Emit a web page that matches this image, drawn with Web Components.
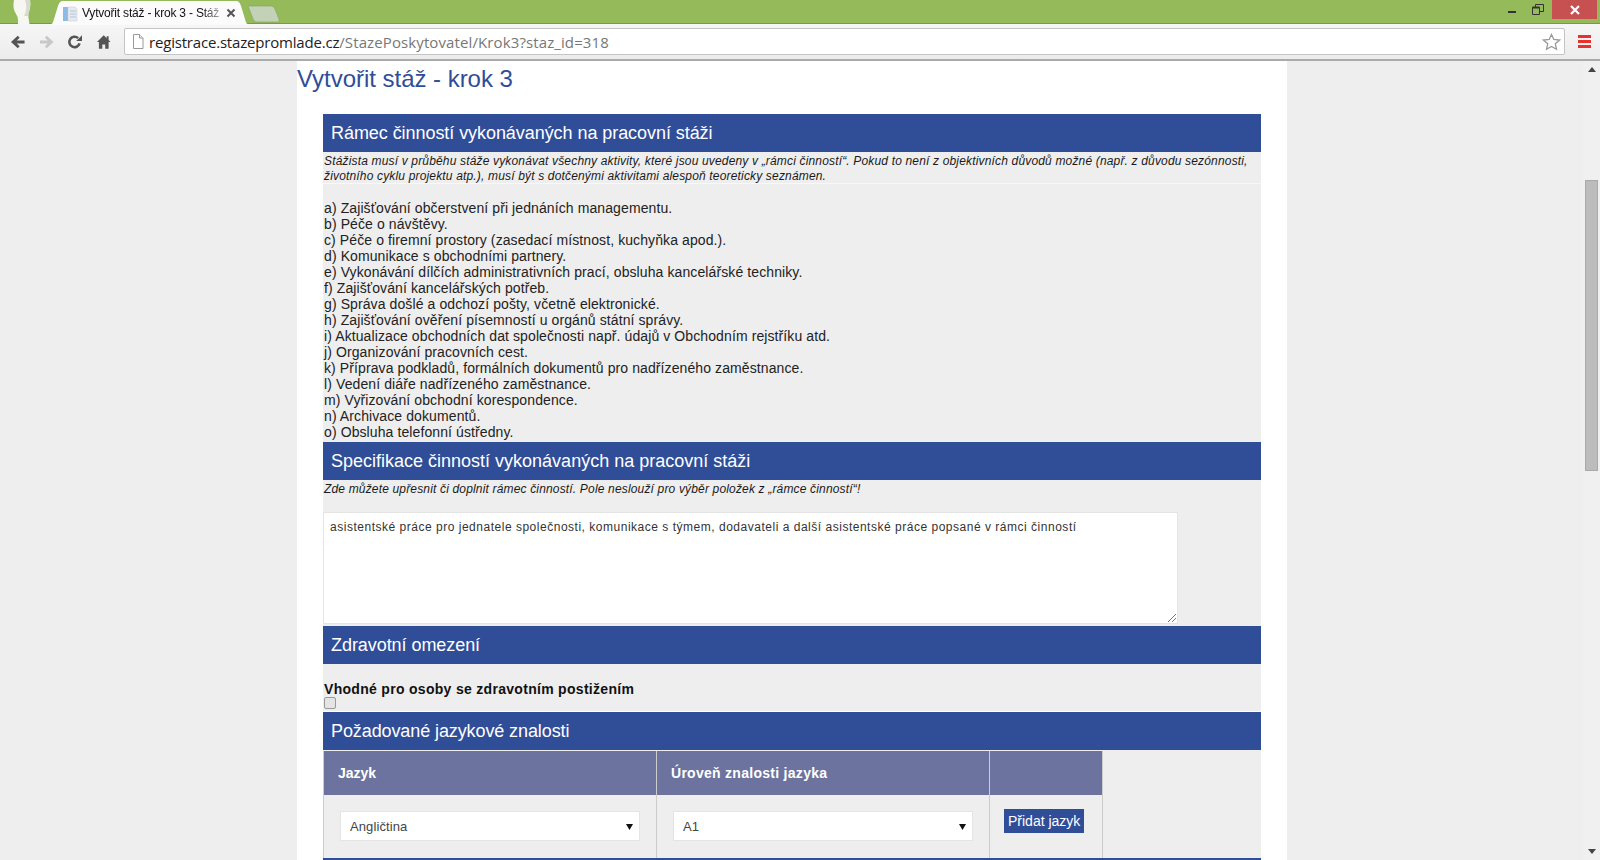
<!DOCTYPE html>
<html lang="cs"><head><meta charset="utf-8"><title>Vytvořit stáž - krok 3</title>
<style>
html,body{margin:0;height:860px;overflow:hidden;font-family:"Liberation Sans",Arial,sans-serif;background:#eee}
body{display:flex;flex-direction:column}
</style></head><body>
<browser-chrome></browser-chrome>
<page-view>
  <h-title>Vytvořit stáž - krok 3</h-title>
  <form-panel>
    <sec-head>Rámec činností vykonávaných na pracovní stáži</sec-head>
    <sec-note bordered>Stážista musí v průběhu stáže vykonávat všechny aktivity, které jsou uvedeny v „rámci činností“. Pokud to není z objektivních důvodů možné (např. z důvodu sezónnosti, životního cyklu projektu atp.), musí být s dotčenými aktivitami alespoň teoreticky seznámen.</sec-note>
    <activity-list>
      <div>a) Zajišťování občerstvení při jednáních managementu.</div>
      <div>b) Péče o návštěvy.</div>
      <div>c) Péče o firemní prostory (zasedací místnost, kuchyňka apod.).</div>
      <div>d) Komunikace s obchodními partnery.</div>
      <div>e) Vykonávání dílčích administrativních prací, obsluha kancelářské techniky.</div>
      <div>f) Zajišťování kancelářských potřeb.</div>
      <div>g) Správa došlé a odchozí pošty, včetně elektronické.</div>
      <div>h) Zajišťování ověření písemností u orgánů státní správy.</div>
      <div>i) Aktualizace obchodních dat společnosti např. údajů v Obchodním rejstříku atd.</div>
      <div>j) Organizování pracovních cest.</div>
      <div>k) Příprava podkladů, formálních dokumentů pro nadřízeného zaměstnance.</div>
      <div>l) Vedení diáře nadřízeného zaměstnance.</div>
      <div>m) Vyřizování obchodní korespondence.</div>
      <div>n) Archivace dokumentů.</div>
      <div>o) Obsluha telefonní ústředny.</div>
    </activity-list>
    <sec-head style="letter-spacing:0">Specifikace činností vykonávaných na pracovní stáži</sec-head>
    <sec-note>Zde můžete upřesnit či doplnit rámec činností. Pole neslouží pro výběr položek z „rámce činností“!</sec-note>
    <spec-area>asistentské práce pro jednatele společnosti, komunikace s týmem, dodavateli a další asistentské práce popsané v rámci činností</spec-area>
    <sec-head>Zdravotní omezení</sec-head>
    <health-check>Vhodné pro osoby se zdravotním postižením</health-check>
    <sec-head style="letter-spacing:-.1px">Požadované jazykové znalosti</sec-head>
    <lang-table></lang-table>
    <end-band></end-band>
  </form-panel>
</page-view>
<script>
function def(name,html,init){
  customElements.define(name,class extends HTMLElement{
    constructor(){super();this.attachShadow({mode:'open'}).innerHTML=html;}
    connectedCallback(){init&&init(this)}
  });
}
def('browser-chrome',`<style>
:host{display:block;flex:none;height:61px;font-family:"Open Sans","Liberation Sans",sans-serif}
.tabs{height:24px;background:#94ba5a;border-bottom:1px solid #769a46;box-sizing:border-box;display:flex;position:relative}
.avatar{width:20px;height:25px;margin-left:12px;flex:none;position:relative;z-index:2}
.tab{position:absolute;left:49px;top:1px;width:200px;height:24px;z-index:1}
.tab svg{position:absolute;left:0;top:0}
.tabtext{position:absolute;left:33px;top:3px;width:140px;font:12px/18px "Liberation Sans",sans-serif;letter-spacing:-.2px;white-space:nowrap;color:#111;-webkit-mask-image:linear-gradient(90deg,#000 86%,rgba(0,0,0,.25))}
.ntab{position:absolute;left:247px;top:5px}
.win{margin-left:auto;display:flex;height:19px}
.win span{display:flex;align-items:center;justify-content:center}
.min{width:26px;padding-top:5px;box-sizing:border-box}.max{width:26px;margin-right:1px}
.close{width:45px;background:#c75050}
.end{width:3px}
.bar{box-sizing:border-box;background:linear-gradient(#f6f6f6,#ececec);border-bottom:2px solid #aaa;display:flex;align-items:center;padding:0 0 0 10px;height:37px}
.nav{display:flex;width:114px;flex:none}
.nav svg{display:block;margin-right:13px}
.omni{width:1441px;height:27px;box-sizing:border-box;background:#fff;border:1px solid #c4c4c4;border-radius:2px;display:flex;align-items:center;font:15px/24px "Open Sans",sans-serif;color:#222;flex:none}
.omni .d{letter-spacing:-.19px}
.omni i{font-style:normal;color:#777;letter-spacing:.11px}
.omni svg.p{margin:0 5px 0 7px;flex:none}
.omni svg.s{margin-left:auto;margin-right:3px}
.menu{margin-left:13px;width:13px;height:13px;flex:none;display:flex;flex-direction:column;justify-content:space-between}
.menu b{display:block;height:3px;background:#e8302c}
</style>
<div class="tabs">
<svg class="avatar" viewBox="0 0 20 25"><path d="M2 0H18C18.500 3 18.500 7 17.500 10C16.800 12 16.200 13.500 16.300 15.500C16.400 18 17 21 17.500 24H6C6.200 21 6 19 5.500 17C4.500 14 1.500 11 1.500 6C1.500 3.500 1.700 1.500 2 0Z" fill="#f6f7f0"/><path d="M13 0C15 5 14.500 12 12 16H16.300C16.200 13.500 16.800 12 17.500 10C18.500 7 18.500 3 18 0Z" fill="#d8dcd0"/></svg>
<div class="tab"><svg width="200" height="24"><path d="M0 23.500C4 23.500 4 21 5 18L9 5C10 2 11 0 14 0H187C190 0 191 2 192 5L196 18C197 22 198 23.500 200 23.500V24H0Z" fill="#fbfbfb"/></svg>
<svg style="left:14px;top:5px" width="15" height="16" viewBox="0 0 15 16"><path d="M0 1h5v14H0z" fill="#8cbce6"/><path d="M5 1h7l2 2v12H5z" fill="#e6e9ee" stroke="#c5cbd3" stroke-width=".5"/><path d="M7 5h6M7 8h6M7 11h6" stroke="#b9c4d2"/></svg>
<div class="tabtext">Vytvořit stáž - krok 3 - Stáž</div>
<svg style="left:177px;top:7px" width="10" height="10" viewBox="0 0 10 10"><path d="M1.500 1.500l7 7m0-7l-7 7" stroke="#555" stroke-width="2"/></svg></div>
<svg class="ntab" width="34" height="18" viewBox="0 0 34 18"><path d="M1 1H24C26 1 27 2 28 4L32 14C32.500 16 32 17 30 17H10C8 17 7 16 6 14Z" fill="#c3d2b6" stroke="#86a85e" stroke-width=".7"/></svg>
<div class="win"><span class="min"><svg width="8" height="2"><rect width="8" height="2" fill="#333"/></svg></span><span class="max"><svg width="12" height="11" viewBox="0 0 12 11"><path d="M.500 3.500h7v7h-7zM3.500 3V.5h8v7H8" fill="none" stroke="#333"/><path d="M.5 3.500h7" stroke="#333" stroke-width="2"/></svg></span><span class="close"><svg width="12" height="10" viewBox="0 0 12 10"><path d="M2 1l8 8m0-8l-8 8" stroke="#fff" stroke-width="2.200"/></svg></span><span class="end"></span></div>
</div>
<div class="bar"><div class="nav">
<svg width="16" height="16" viewBox="0 0 16 16"><path d="M15 6.500H7L10 3.500 8 1.500 1 8l7 6.500 2-2-3-3h8z" fill="#555"/></svg>
<svg width="16" height="16" viewBox="0 0 16 16"><path d="M1 6.500h8L6 3.500l2-2L15 8l-7 6.500-2-2 3-3H1z" fill="#c8c8c8"/></svg>
<svg width="16" height="16" viewBox="0 0 16 16"><path d="M13 9.500A5.400 5.400 0 1 1 11.500 4" fill="none" stroke="#555" stroke-width="2.600"/><path d="M9.500 7L15.500 7 15.500 1z" fill="#555"/></svg>
<svg width="16" height="16" viewBox="0 0 16 16"><path d="M8 1L1 8h2v7h3.500v-4.500h3V15H13V8h2l-2-2V2h-2v2z" fill="#555"/></svg></div>
<div class="omni"><svg class="p" width="12" height="15" viewBox="0 0 12 15"><path d="M1.500.5h6l3.500 3.500v10.500h-9.500z" fill="#fff" stroke="#999"/><path d="M7.500.5V4H11" fill="#eee" stroke="#999"/></svg><span><span class="d">registrace.stazepromlade.cz</span><i>/StazePoskytovatel/Krok3?staz_id=318</i></span>
<svg class="s" width="19" height="18" viewBox="0 0 19 18"><path d="M9.500 1.500l2.300 5 5.700.6-4.200 3.700 1.200 5.500-5-2.800-5 2.800 1.200-5.500L1.500 7.100l5.700-.6z" fill="#fff" stroke="#999" stroke-width="1.300"/></svg></div>
<div class="menu"><b></b><b></b><b></b></div></div>`);
def('page-view',`<style>
:host{display:flex;flex:1;min-height:0;position:relative;overflow:hidden}
.page{flex:1;min-width:0;padding-left:297px;box-sizing:border-box;background:#eee}
.col{width:990px;background:#fff;height:100%;box-sizing:border-box}
.sb{width:17px;flex:none;background:#f0f0f0;position:relative;display:flex;flex-direction:column}
.up,.dn{height:19px;flex:none;display:flex;align-items:center;justify-content:center}
.up svg{margin-top:-2px}.th{position:absolute;left:2px;right:2px;top:119px;height:291px;background:#bcbcbc;border:1px solid #a9a9a9;box-sizing:border-box}
.dn{margin-top:auto;margin-bottom:-1px}
</style>
<div class="page"><div class="col"><slot></slot></div></div>
<div class="sb"><div class="up"><svg width="8" height="5"><path d="M4 0l4 5H0z" fill="#444"/></svg></div><div class="th"></div><div class="dn"><svg width="8" height="5"><path d="M0 0h8L4 5z" fill="#444"/></svg></div></div>`);
def('h-title',`<style>:host{display:block;font:24px/30px "Liberation Sans",Arial,sans-serif;letter-spacing:-.03px;color:#2f4d99;height:53px;padding-top:3px;box-sizing:border-box}</style><slot></slot>`);
def('form-panel',`<style>:host{display:block;width:938px;margin-left:26px;background:#eee}</style><slot></slot>`);
def('sec-head',`<style>:host{display:block;height:38px;background:#304d98;color:#fff;font:18px/38px "Liberation Sans",Arial,sans-serif;letter-spacing:-.06px;padding-left:8px;box-sizing:border-box}</style><slot></slot>`);
def('end-band',`<style>:host{display:block;height:20px;background:#304d98}</style>`);
def('sec-note',`<style>:host{display:block;font:italic 12px/15px "Liberation Sans",Arial,sans-serif;letter-spacing:.165px;color:#1a1a1a;padding:2px 1px 0 1px;box-sizing:border-box;height:31px}:host([bordered]){border-bottom:1px solid #f8f8f8;height:32px}</style><slot></slot>`);
def('activity-list',`<style>:host{display:block;font:14px/16px "Liberation Sans",Arial,sans-serif;letter-spacing:.1px;color:#222;padding:16px 1px 2px}</style><slot></slot>`);
def('spec-area',`<style>:host{display:block;height:112px;width:855px;margin-top:1px;background:#fff;border:1px solid #e4e4e4;box-sizing:border-box;padding:6px 5px 6px 6px;font:12px/16px "Liberation Sans",Arial,sans-serif;letter-spacing:.515px;color:#333;position:relative;margin-bottom:2px}svg{position:absolute;right:1px;bottom:1px}</style><slot></slot><svg width="9" height="9" viewBox="0 0 9 9"><path d="M9 1L1 9M9 5L5 9" stroke="#777"/></svg>`);
def('health-check',`<style>:host{display:block;height:48px;padding-top:16px;box-sizing:border-box;font:bold 14px/18px "Liberation Sans",Arial,sans-serif;letter-spacing:.3px;color:#111;border-bottom:1px solid #fff}.c{display:block;width:12px;height:12px;margin:-1px 0 0 1px;box-sizing:border-box;border:1px solid #9a9a9a;border-radius:2px;background:#e4e4e4}.l{padding-left:1px;display:block}</style><span class="l"><slot></slot></span><span class="c"></span>`);
def('lang-table',`<style>
:host{display:grid;grid-template-columns:333px 333px 114px;width:780px;height:108px;grid-template-rows:44px 63px;padding-top:1px;box-sizing:border-box;font-family:"Liberation Sans",Arial,sans-serif;background:#eee}
.th{background:#6b739e;color:#fff;font:bold 14px/44px "Liberation Sans",Arial,sans-serif;padding-left:14px;border-left:1px solid #ccc;box-sizing:border-box}
.wide{letter-spacing:.28px}
.td{border-left:1px solid #ccc;box-sizing:border-box;padding:16px 0 0 16px}
.last{border-right:1px solid #ccc;padding:14px 0 0 14px}
.sel{width:300px;height:30px;background:#fff;border:1px solid #e4e4e4;box-sizing:border-box;font:13px/28px "Liberation Sans",Arial,sans-serif;letter-spacing:.1px;color:#444;padding:1px 0 0 9px;display:flex;justify-content:space-between;align-items:center}
.sel svg{margin-right:6px}
.btn{display:inline-block;background:#304d98;color:#fff;font:14px/24px "Liberation Sans",Arial,sans-serif;padding:0 4px;height:24px}
</style>
<div class="th">Jazyk</div><div class="th wide">Úroveň znalosti jazyka</div><div class="th last" style="padding:0"></div>
<div class="td"><div class="sel"><span>Angličtina</span><svg width="7" height="7"><path d="M0 1h7L3.500 7z" fill="#111"/></svg></div></div>
<div class="td"><div class="sel"><span>A1</span><svg width="7" height="7"><path d="M0 1h7L3.500 7z" fill="#111"/></svg></div></div>
<div class="td last"><span class="btn">Přidat jazyk</span></div>`);
</script>
</body></html>
